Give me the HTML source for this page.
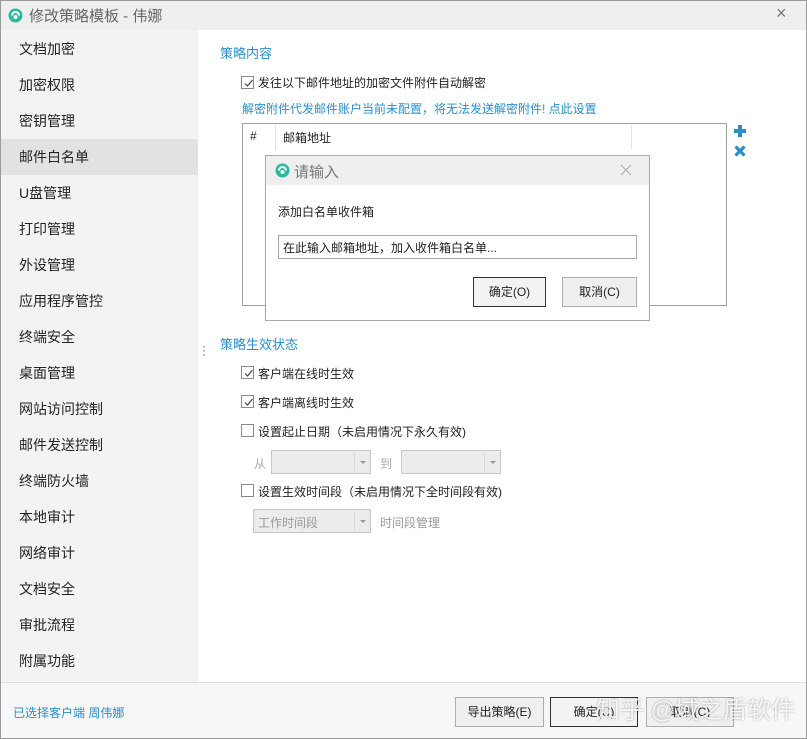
<!DOCTYPE html>
<html><head><meta charset="utf-8">
<style>
*{box-sizing:border-box;margin:0;padding:0}
body{width:807px;height:739px;position:relative;overflow:hidden;background:#fff;font-family:"Liberation Sans","Noto Sans CJK SC",sans-serif;font-size:12px;color:#222}
.abs{position:absolute}
.win{position:absolute;left:0;top:0;width:807px;height:739px;border:1px solid #9a9a9a}
.title{left:1px;top:1px;width:805px;height:29px;background:#efefef}
.side{left:1px;top:30px;width:197px;height:652px;background:#f3f3f3}
.item{position:absolute;left:19px;font-size:14px;color:#222}
.sel{left:1px;top:139px;width:197px;height:36px;background:#e2e2e2}
.blue{color:#2a8fc8}
.cb{position:absolute;width:13px;height:13px;border:1px solid #8a8a8a;background:#fff}
.cb svg{position:absolute;left:1px;top:1px}
.txt{position:absolute;white-space:nowrap}
.dd{position:absolute;height:24px;border:1px solid #c8c8c8;background:#ececec}
.dd .ar{position:absolute;right:0;top:2px;width:16px;height:18px;border-left:1px solid #d8d8d8}
.dd .ar:after{content:"";position:absolute;left:5px;top:8px;border:3px solid transparent;border-top:3px solid #999}
.btn{position:absolute;height:30px;border:1px solid #adadad;background:#efefef;text-align:center;line-height:28px;font-size:12px;color:#222}
</style></head><body>
<div class="win"></div>
<div class="abs title"></div>
<svg class="abs" style="left:8px;top:8px" width="15" height="15" viewBox="0 0 15 15"><circle cx="7.5" cy="7.5" r="7" fill="#2bb9a0"/><path d="M4 7.5a3.5 3.5 0 0 1 7 0" stroke="#fff" stroke-width="2" fill="none"/><circle cx="7.5" cy="9" r="2" fill="#fff"/></svg>
<div class="txt" style="left:29px;top:5px;font-size:15px;color:#666">修改策略模板 - 伟娜</div>
<div class="txt" style="left:776px;top:3px;font-size:18px;color:#777">×</div>
<div class="abs side"></div>
<div class="abs sel"></div>
<div class="item" style="top:39px">文档加密</div>
<div class="item" style="top:75px">加密权限</div>
<div class="item" style="top:111px">密钥管理</div>
<div class="item" style="top:147px">邮件白名单</div>
<div class="item" style="top:183px">U盘管理</div>
<div class="item" style="top:219px">打印管理</div>
<div class="item" style="top:255px">外设管理</div>
<div class="item" style="top:291px">应用程序管控</div>
<div class="item" style="top:327px">终端安全</div>
<div class="item" style="top:363px">桌面管理</div>
<div class="item" style="top:399px">网站访问控制</div>
<div class="item" style="top:435px">邮件发送控制</div>
<div class="item" style="top:471px">终端防火墙</div>
<div class="item" style="top:507px">本地审计</div>
<div class="item" style="top:543px">网络审计</div>
<div class="item" style="top:579px">文档安全</div>
<div class="item" style="top:615px">审批流程</div>
<div class="item" style="top:651px">附属功能</div>
<div class="txt" style="left:202px;top:344px;color:#555;font-size:12px;line-height:4px">·<br>·<br>·</div>

<div class="txt blue" style="left:220px;top:43px;font-size:13px">策略内容</div>
<div class="cb" style="left:241px;top:76px"><svg width="11" height="11"><path d="M2 5.5l2.5 2.5 5-6" stroke="#444" fill="none" stroke-width="1.2"/></svg></div>
<div class="txt" style="left:258px;top:74px">发往以下邮件地址的加密文件附件自动解密</div>
<div class="txt blue" style="left:242px;top:100px">解密附件代发邮件账户当前未配置，将无法发送解密附件! 点此设置</div>
<div class="abs" style="left:242px;top:123px;width:485px;height:183px;border:1px solid #a0a0a0"></div>
<div class="txt" style="left:250px;top:129px;font-size:12px">#</div>
<div class="abs" style="left:275px;top:125px;width:1px;height:25px;background:#e5e5e5"></div>
<div class="abs" style="left:631px;top:125px;width:1px;height:25px;background:#e5e5e5"></div>
<div class="txt" style="left:283px;top:129px;font-size:12px">邮箱地址</div>
<svg class="abs" style="left:733px;top:124px" width="14" height="14"><path d="M7 1v12M1 7h12" stroke="#2a8fc8" stroke-width="4"/></svg>
<svg class="abs" style="left:734px;top:145px" width="12" height="12"><path d="M1.5 1.5l9 9M10.5 1.5l-9 9" stroke="#2a8fc8" stroke-width="3.2"/></svg>

<div class="abs" style="left:265px;top:155px;width:385px;height:166px;border:1px solid #a8a8a8;background:#fff"></div>
<div class="abs" style="left:266px;top:156px;width:383px;height:29px;background:#efefef"></div>
<svg class="abs" style="left:275px;top:163px" width="15" height="15" viewBox="0 0 15 15"><circle cx="7.5" cy="7.5" r="7" fill="#2bb9a0"/><path d="M4 7.5a3.5 3.5 0 0 1 7 0" stroke="#fff" stroke-width="2" fill="none"/><circle cx="7.5" cy="9" r="2" fill="#fff"/></svg>
<div class="txt" style="left:294px;top:161px;font-size:15px;color:#777">请输入</div>
<svg class="abs" style="left:620px;top:164px" width="12" height="12"><path d="M1 1l10 10M11 1L1 11" stroke="#aaa" stroke-width="1"/></svg>
<div class="txt" style="left:278px;top:203px">添加白名单收件箱</div>
<div class="abs" style="left:278px;top:235px;width:359px;height:24px;border:1px solid #a8a8a8"></div>
<div class="txt" style="left:283px;top:239px">在此输入邮箱地址，加入收件箱白名单...</div>
<div class="btn" style="left:473px;top:277px;width:73px;border-color:#333;background:#f3f3f3">确定(O)</div>
<div class="btn" style="left:562px;top:277px;width:75px">取消(C)</div>

<div class="txt blue" style="left:220px;top:334px;font-size:13px">策略生效状态</div>
<div class="cb" style="left:241px;top:366px"><svg width="11" height="11"><path d="M2 5.5l2.5 2.5 5-6" stroke="#444" fill="none" stroke-width="1.2"/></svg></div>
<div class="txt" style="left:258px;top:365px">客户端在线时生效</div>
<div class="cb" style="left:241px;top:395px"><svg width="11" height="11"><path d="M2 5.5l2.5 2.5 5-6" stroke="#444" fill="none" stroke-width="1.2"/></svg></div>
<div class="txt" style="left:258px;top:394px">客户端离线时生效</div>
<div class="cb" style="left:241px;top:424px"></div>
<div class="txt" style="left:258px;top:423px">设置起止日期（未启用情况下永久有效)</div>
<div class="txt" style="left:254px;top:455px;color:#aaa">从</div>
<div class="dd" style="left:271px;top:450px;width:100px"><div class="ar"></div></div>
<div class="txt" style="left:380px;top:455px;color:#aaa">到</div>
<div class="dd" style="left:401px;top:450px;width:100px"><div class="ar"></div></div>
<div class="cb" style="left:241px;top:484px"></div>
<div class="txt" style="left:258px;top:483px">设置生效时间段（未启用情况下全时间段有效)</div>
<div class="dd" style="left:253px;top:509px;width:118px"><div class="ar"></div></div>
<div class="txt" style="left:258px;top:514px;color:#999">工作时间段</div>
<div class="txt" style="left:380px;top:514px;color:#999">时间段管理</div>

<div class="abs" style="left:1px;top:682px;width:805px;height:56px;background:#f7f7f7;border-top:1px solid #ddd"></div>
<div class="txt blue" style="left:13px;top:704px">已选择客户端 周伟娜</div>
<div class="btn" style="left:455px;top:697px;width:89px">导出策略(E)</div>
<div class="btn" style="left:550px;top:697px;width:88px;border-color:#333;background:#f3f3f3">确定(C)</div>
<div class="btn" style="left:646px;top:697px;width:88px">取消(C)</div>
<div class="txt" style="left:596px;top:690px;font-size:24px;color:rgba(255,255,255,0.85);text-shadow:0 0 2px rgba(0,0,0,0.35)">知乎 @域之盾软件</div>
</body></html>
